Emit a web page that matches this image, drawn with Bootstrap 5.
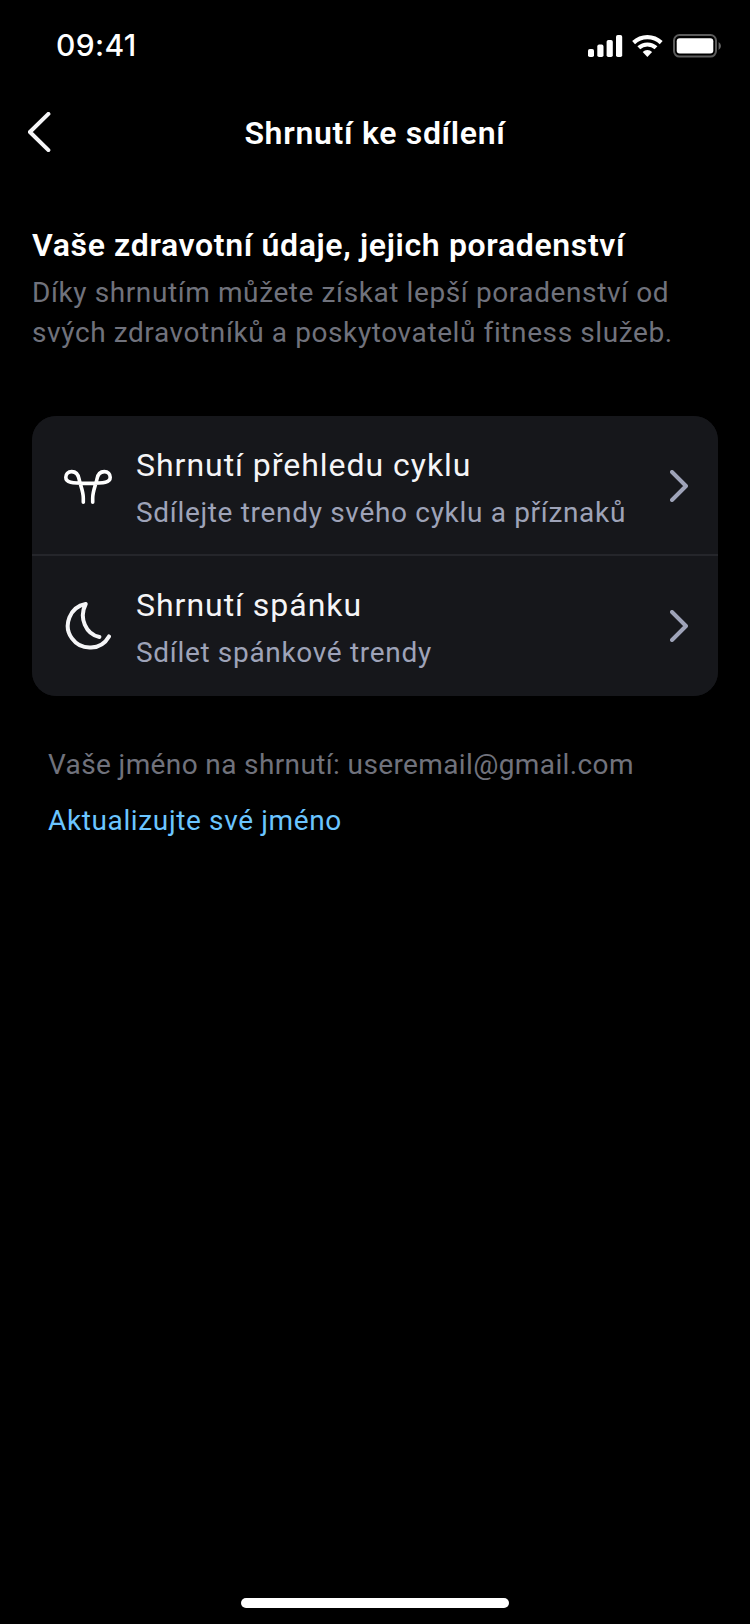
<!DOCTYPE html>
<html lang="cs" data-bs-theme="dark">
<head>
<meta charset="utf-8">
<meta name="viewport" content="width=device-width, initial-scale=1">
<title>Shrnutí ke sdílení</title>
<link href="https://cdn.jsdelivr.net/npm/bootstrap@5.3.0/dist/css/bootstrap.min.css" rel="stylesheet">
<style>
body{background:#000;color:#f5f5f7;font-family:Roboto,"Liberation Sans",sans-serif;font-size:28px;line-height:40px}
svg{display:block;flex:none}
.screen{height:1624px;overflow:hidden}
.statusbar{height:94px;padding:0 28px 0 56px}
.clock{font-family:Inter,sans-serif;font-weight:500;font-size:30px;line-height:36px;color:#fff;margin-top:27px;letter-spacing:.35px}
.signals{margin-top:33px}
.topbar{height:131px;padding:18px 28px 0;display:grid;grid-template-columns:24px 1fr 24px}
.topbar h1{margin:1px 0 0;font-size:32px;line-height:40px;font-weight:600;color:#fff;letter-spacing:.7px}
.intro{padding:0 32px}
.intro h2{font-size:32px;line-height:40px;font-weight:600;letter-spacing:.65px;margin:0 0 8px;white-space:nowrap}
.intro p{color:#70727c;letter-spacing:.6px;margin:0 0 63px;white-space:nowrap}
.summaries{margin:0 32px;background:#16171b;--bs-list-group-bg:#16171b;--bs-list-group-border-width:0;border-radius:24px;overflow:hidden}
.summaries .list-group-item{height:140px;padding:5px 30px 0 32px;gap:24px;border:0}
.summaries .list-group-item:first-child{padding-top:7px;border-bottom:2px solid #25262b}
.summaries svg{margin-top:-5px}
.label{font-size:32px;color:#f5f5f7;margin-bottom:8px;letter-spacing:.97px}
.hint{color:#9ea3b8;letter-spacing:.68px}
.account{padding:49px 48px 0;color:#70727c;letter-spacing:.38px}
.account a{color:#6bc5ff;text-decoration:none;letter-spacing:.63px}
.home-bar{width:268px;height:10px;border-radius:5px;background:#fff;margin-bottom:16px}
</style>
</head>
<body>
<div class="screen d-flex flex-column">
  <div class="statusbar d-flex justify-content-between align-items-start">
    <div class="clock">09:41</div>
    <svg class="signals" width="134" height="26" viewBox="588 33 134 26" fill="#fff">
      <rect x="588" y="49" width="6" height="8" rx="1.8"/><rect x="597.3" y="44.6" width="6.2" height="12.4" rx="1.8"/><rect x="606.6" y="40" width="6.2" height="17" rx="1.8"/><rect x="616" y="35" width="6.2" height="22" rx="1.8"/>
      <g fill="none" stroke="#fff" stroke-width="4.2"><path d="M633.6 42.6a20.2 20.2 0 0 1 27.6 0"/><path d="M638.8 47.8a12.8 12.8 0 0 1 17.2 0"/></g>
      <path d="M642.7 51.9a7 7 0 0 1 9.4 0L647.4 57z"/>
      <rect x="674" y="35" width="42" height="21.6" rx="5.5" fill="none" stroke="#5c5c5c" stroke-width="2"/>
      <rect x="676.7" y="38.2" width="36.6" height="15.4" rx="3"/>
      <path d="M718.6 42v8a4.6 4.6 0 0 0 0-8" fill="#666"/>
    </svg>
  </div>
  <header class="topbar">
    <svg width="24" height="40" viewBox="0 0 24 40" fill="none" stroke="#f5f5f7" stroke-width="4" stroke-linecap="round" stroke-linejoin="round"><path d="M20.4 1.9 1.9 20l18.5 18.1"/></svg>
    <h1 class="text-center">Shrnutí ke sdílení</h1>
  </header>
  <main class="flex-grow-1">
    <section class="intro">
      <h2>Vaše zdravotní údaje, jejich poradenství</h2>
      <p>Díky shrnutím můžete získat lepší poradenství od<br>svých zdravotníků a poskytovatelů fitness služeb.</p>
    </section>
    <div class="list-group summaries">
      <a href="#" class="list-group-item d-flex align-items-center">
        <svg width="48" height="48" viewBox="0 0 48 48" fill="none" stroke="#fff" stroke-width="3.6" stroke-linecap="round" stroke-linejoin="round"><path d="M19.3 40.2v-4.2C19.3 29 16.2 23 15.1 17.2 14.2 12 11.2 9.6 7.7 9.6 4 9.6 1.8 12.3 1.8 15.2c0 5.4 5.4 6.2 22.2 6.2s22.2-.8 22.2-6.2c0-2.9-2.2-5.6-5.9-5.6-3.5 0-6.5 2.4-7.4 7.6-1.1 5.8-4.2 11.8-4.2 18.8v4.2"/></svg>
        <div class="flex-grow-1"><div class="label">Shrnutí přehledu cyklu</div><div class="hint">Sdílejte trendy svého cyklu a příznaků</div></div>
        <svg width="18" height="32" viewBox="0 0 18 32" fill="none" stroke="#9ea3b8" stroke-width="4" stroke-linecap="round" stroke-linejoin="round"><path d="M2 2l14 14L2 30"/></svg>
      </a>
      <a href="#" class="list-group-item d-flex align-items-center">
        <svg width="48" height="48" viewBox="0 0 48 48" fill="none" stroke="#f5f5f7" stroke-width="4" stroke-linecap="round" stroke-linejoin="round"><path d="M45 34.4A22 22 0 1 1 21.7 2C14.5 16 22 32.5 35.4 35"/></svg>
        <div class="flex-grow-1"><div class="label">Shrnutí spánku</div><div class="hint">Sdílet spánkové trendy</div></div>
        <svg width="18" height="32" viewBox="0 0 18 32" fill="none" stroke="#9ea3b8" stroke-width="4" stroke-linecap="round" stroke-linejoin="round"><path d="M2 2l14 14L2 30"/></svg>
      </a>
    </div>
    <section class="account d-flex flex-column align-items-start gap-3">
      <div>Vaše jméno na shrnutí: useremail@gmail.com</div>
      <a href="#">Aktualizujte své jméno</a>
    </section>
  </main>
  <div class="home-bar align-self-center"></div>
</div>
<script src="https://cdn.jsdelivr.net/npm/bootstrap@5.3.0/dist/js/bootstrap.bundle.min.js"></script>
</body>
</html>
